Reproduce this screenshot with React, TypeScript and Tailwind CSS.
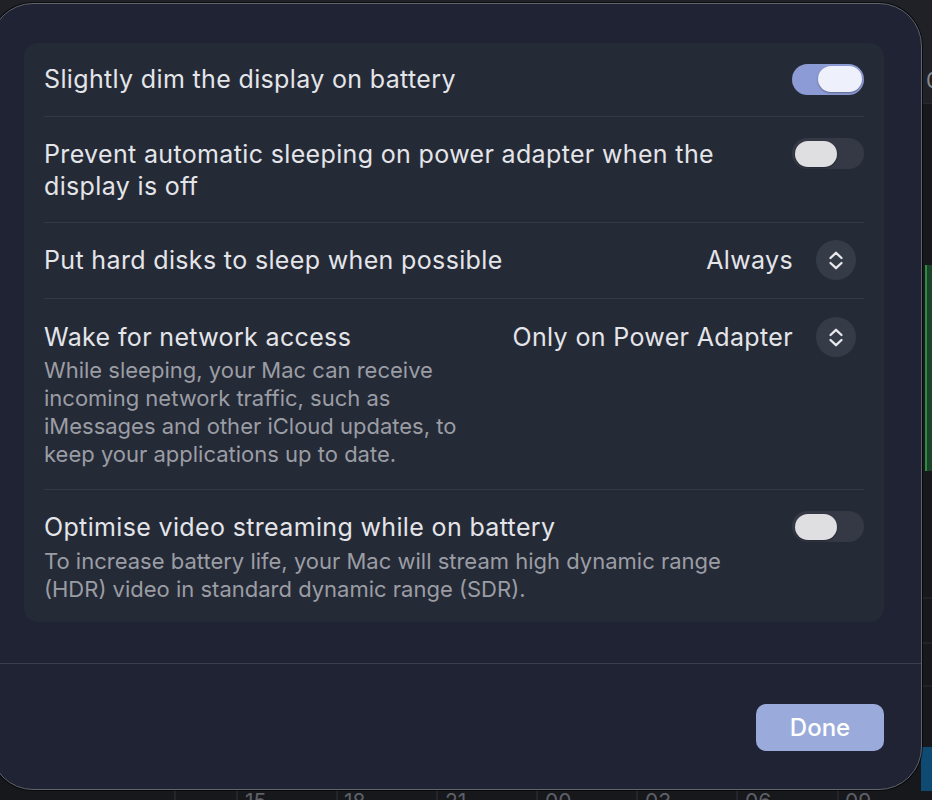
import type { ReactNode } from "react"

const FONT = { fontFamily: "Inter, 'Noto Sans', sans-serif" }

function Toggle({ on }: { on: boolean }) {
    return (
        <div
            className={`flex h-[31px] w-[72px] shrink-0 items-center rounded-full ${
                on ? "justify-end bg-[#8c9bd5] pr-[2px]" : "justify-start bg-[#353946] pl-[3px]"
            }`}
        >
            <div
                className={`h-[26px] rounded-full shadow-[0_1px_2px_rgba(0,0,0,0.35)] ${
                    on ? "w-[44px] bg-[#eef0fb]" : "w-[42px] bg-[#dfdfe1]"
                }`}
            />
        </div>
    )
}

function Stepper() {
    return (
        <div className="flex h-[40px] w-[40px] shrink-0 items-center justify-center rounded-full bg-[#363b48]">
            <svg width="40" height="40" viewBox="0 0 40 40" fill="none">
                <path d="M14.5 18 L20 12.8 L25.5 18" stroke="#e8e9ec" strokeWidth="2.3" strokeLinecap="round" strokeLinejoin="round" />
                <path d="M14.5 23 L20 28.2 L25.5 23" stroke="#e8e9ec" strokeWidth="2.3" strokeLinecap="round" strokeLinejoin="round" />
            </svg>
        </div>
    )
}

function Popup({ value }: { value: string }) {
    return (
        <div className="flex h-[32px] shrink-0 items-center gap-[23px] pr-[8px]">
            <span className="text-[25px] leading-[32px] tracking-[0.35px] text-[#e4e5e9]">{value}</span>
            <Stepper />
        </div>
    )
}

function Row({ children, last, className }: { children: ReactNode; last?: boolean; className: string }) {
    return (
        <div className={`flex justify-between ${last ? "" : "border-b border-[#343946]"} ${className}`}>
            {children}
        </div>
    )
}

function Title({ children }: { children: ReactNode }) {
    return <div className="text-[25px] leading-[32px] tracking-[0.35px] text-[#e4e5e9]">{children}</div>
}

function Desc({ children, className }: { children: ReactNode; className: string }) {
    return <div className={`text-[22px] leading-[28px] text-[#9b9da4] ${className}`}>{children}</div>
}

// chart sitting behind the sheet; mostly covered, only the edges show
function BackChart() {
    const ticks = [175, 237, 337, 437, 537, 637, 737, 838]
    const labels = [
        { x: 245, t: "15" },
        { x: 344, t: "18" },
        { x: 445, t: "21" },
        { x: 545, t: "00" },
        { x: 645, t: "03" },
        { x: 745, t: "06" },
        { x: 845, t: "09" },
    ]
    return (
        <svg width="932" height="696" viewBox="0 104 932 696" className="block">
            <rect x="925" y="265" width="10" height="206" fill="#1c4429" />
            <rect x="925" y="265" width="2" height="206" fill="#2f8a44" />
            {[598, 643, 686].map((y) => (
                <line key={y} x1="0" x2="932" y1={y} y2={y} stroke="#2a2c31" strokeWidth="1" />
            ))}
            <rect x="921" y="747" width="12" height="44" fill="#0f4a73" />
            {ticks.map((x) => (
                <line key={x} x1={x} x2={x} y1="790" y2="800" stroke="#303238" strokeWidth="1" />
            ))}
            {labels.map((l) => (
                <text key={l.t} x={l.x} y="809" fill="#5d6068" fontSize="21" fontFamily="Inter, sans-serif">
                    {l.t}
                </text>
            ))}
        </svg>
    )
}

export default function App() {
    return (
        <div className="relative h-[800px] w-[932px] overflow-hidden bg-[#17181c]" style={FONT}>
            <div className="flex h-[104px] items-start justify-end border-b border-[#26282d] bg-[#1f2127] pt-[66px]">
                <span className="mr-[-8px] text-[22px] leading-[28px] text-[#8a8c92]">0</span>
            </div>
            <BackChart />

            <div className="absolute left-[-10px] top-[3px] flex h-[787px] w-[932px] flex-col rounded-[43px] border border-[#5f636c] bg-[#1f2333] shadow-[0_0_0_1px_rgba(0,0,0,0.6)]">
                <div className="ml-[33px] mt-[39px] w-[860px] rounded-[14px] bg-[#252a37] px-[20px]">
                    <Row className="items-center pb-[21px] pt-[20px]">
                        <Title>Slightly dim the display on battery</Title>
                        <Toggle on />
                    </Row>

                    <Row className="items-start pb-[20px] pt-[21px]">
                        <Title>
                            Prevent automatic sleeping on power adapter when the
                            <br />
                            display is off
                        </Title>
                        <Toggle on={false} />
                    </Row>

                    <Row className="items-center pb-[22px] pt-[21px]">
                        <Title>Put hard disks to sleep when possible</Title>
                        <Popup value="Always" />
                    </Row>

                    <Row className="items-start pb-[21px] pt-[22px]">
                        <div>
                            <Title>Wake for network access</Title>
                            <Desc className="mt-[3px]">
                                While sleeping, your Mac can receive
                                <br />
                                incoming network traffic, such as
                                <br />
                                iMessages and other iCloud updates, to
                                <br />
                                keep your applications up to date.
                            </Desc>
                        </div>
                        <Popup value="Only on Power Adapter" />
                    </Row>

                    <Row last className="items-start pb-[19px] pt-[21px]">
                        <div>
                            <Title>Optimise video streaming while on battery</Title>
                            <Desc className="mt-[4px]">
                                To increase battery life, your Mac will stream high dynamic range
                                <br />
                                (HDR) video in standard dynamic range (SDR).
                            </Desc>
                        </div>
                        <Toggle on={false} />
                    </Row>
                </div>

                <div className="mt-[41px] h-px bg-[#3a3f4c]" />

                <div className="flex justify-end pr-[37px] pt-[40px]">
                    <button className="h-[47px] w-[128px] rounded-[10px] bg-[#9aabdb] text-[24px] font-medium text-white">
                        Done
                    </button>
                </div>
            </div>
        </div>
    )
}
